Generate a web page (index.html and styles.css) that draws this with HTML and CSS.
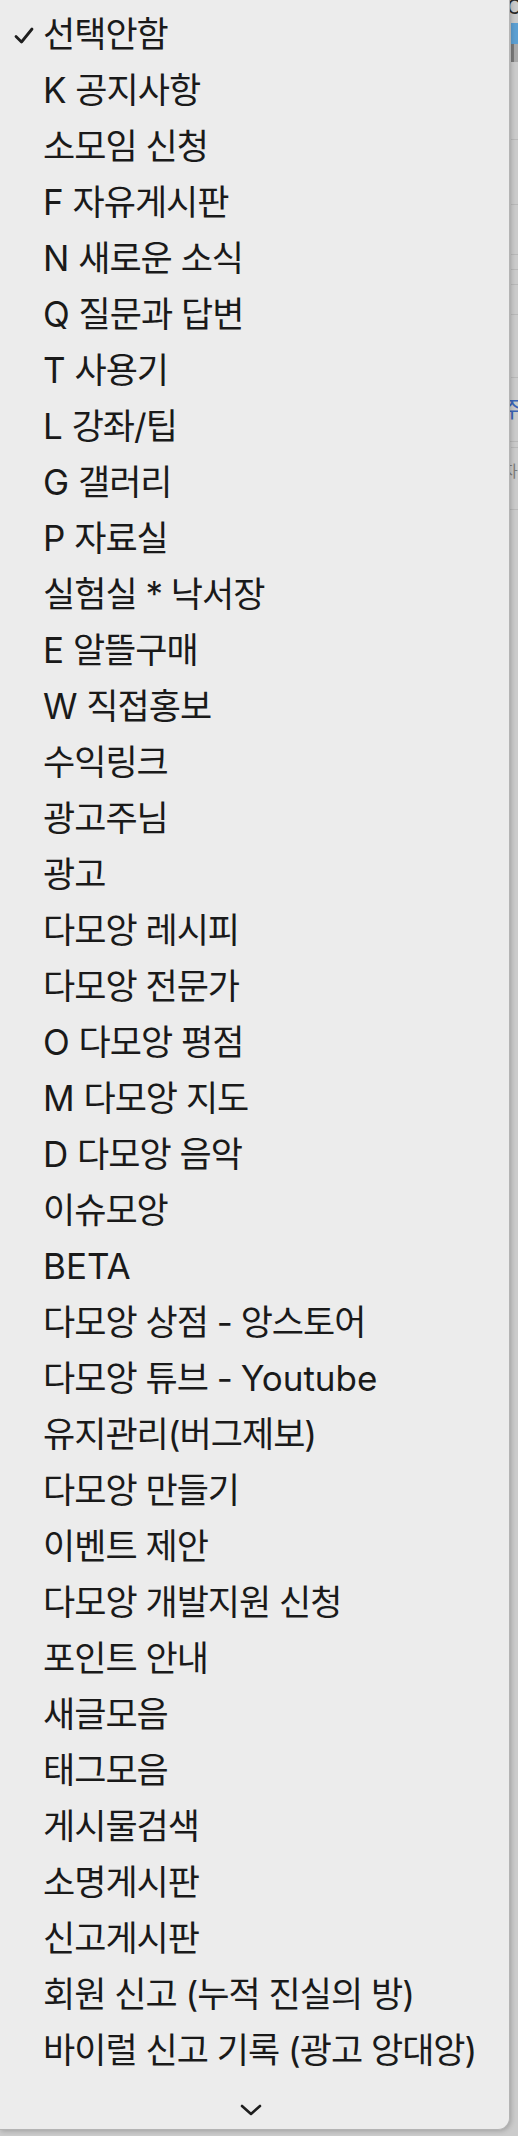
FILE: index.html
```html
<!DOCTYPE html>
<html lang="ko">
<head>
<meta charset="utf-8">
<title>게시판 선택</title>
<link rel="stylesheet" href="styles.css">
</head>
<body>
  <!-- page underneath the open popup -->
  <div class="page">
    <div class="pg-row pg-head">C</div>
    <div class="pg-row pg-tab"></div>
    <div class="pg-row pg-thumb"></div>
    <div class="pg-row pg-line h78"></div>
    <div class="pg-row pg-line h65"></div>
    <div class="pg-row pg-line h50"></div>
    <div class="pg-row pg-line h15"></div>
    <div class="pg-row pg-line h15"></div>
    <div class="pg-row pg-line h30"></div>
    <div class="pg-row pg-line h63"></div>
    <div class="pg-row pg-line h64 pg-link">주</div>
    <div class="pg-row pg-line h6"></div>
    <div class="pg-row pg-line h62 pg-meta">자</div>
  </div>

  <!-- category select popup -->
  <div class="menu" role="listbox">
    <ul class="menu-list">
      <li class="item is-selected" role="option" aria-selected="true">
        <span class="check"><svg width="20" height="18" viewBox="0 0 20 18"><polyline points="2,9.5 7.5,15 18,2" fill="none" stroke="#1e1e1e" stroke-width="2.8" stroke-linecap="round" stroke-linejoin="round"/></svg></span>
        <span class="label">선택안함</span>
      </li>
      <li class="item"><span class="check"></span><span class="label"><span class="lat">K</span> 공지사항</span></li>
      <li class="item"><span class="check"></span><span class="label">소모임 신청</span></li>
      <li class="item"><span class="check"></span><span class="label"><span class="lat">F</span> 자유게시판</span></li>
      <li class="item"><span class="check"></span><span class="label"><span class="lat">N</span> 새로운 소식</span></li>
      <li class="item"><span class="check"></span><span class="label"><span class="lat">Q</span> 질문과 답변</span></li>
      <li class="item"><span class="check"></span><span class="label"><span class="lat">T</span> 사용기</span></li>
      <li class="item"><span class="check"></span><span class="label"><span class="lat">L</span> 강좌/팁</span></li>
      <li class="item"><span class="check"></span><span class="label"><span class="lat">G</span> 갤러리</span></li>
      <li class="item"><span class="check"></span><span class="label"><span class="lat">P</span> 자료실</span></li>
      <li class="item"><span class="check"></span><span class="label">실험실 * 낙서장</span></li>
      <li class="item"><span class="check"></span><span class="label"><span class="lat">E</span> 알뜰구매</span></li>
      <li class="item"><span class="check"></span><span class="label"><span class="lat">W</span> 직접홍보</span></li>
      <li class="item"><span class="check"></span><span class="label">수익링크</span></li>
      <li class="item"><span class="check"></span><span class="label">광고주님</span></li>
      <li class="item"><span class="check"></span><span class="label">광고</span></li>
      <li class="item"><span class="check"></span><span class="label">다모앙 레시피</span></li>
      <li class="item"><span class="check"></span><span class="label">다모앙 전문가</span></li>
      <li class="item"><span class="check"></span><span class="label"><span class="lat">O</span> 다모앙 평점</span></li>
      <li class="item"><span class="check"></span><span class="label"><span class="lat">M</span> 다모앙 지도</span></li>
      <li class="item"><span class="check"></span><span class="label"><span class="lat">D</span> 다모앙 음악</span></li>
      <li class="item"><span class="check"></span><span class="label">이슈모앙</span></li>
      <li class="item"><span class="check"></span><span class="label"><span class="lat">BETA</span></span></li>
      <li class="item"><span class="check"></span><span class="label">다모앙 상점 - 앙스토어</span></li>
      <li class="item"><span class="check"></span><span class="label">다모앙 튜브 - <span class="lat">Youtube</span></span></li>
      <li class="item"><span class="check"></span><span class="label">유지관리(버그제보)</span></li>
      <li class="item"><span class="check"></span><span class="label">다모앙 만들기</span></li>
      <li class="item"><span class="check"></span><span class="label">이벤트 제안</span></li>
      <li class="item"><span class="check"></span><span class="label">다모앙 개발지원 신청</span></li>
      <li class="item"><span class="check"></span><span class="label">포인트 안내</span></li>
      <li class="item"><span class="check"></span><span class="label">새글모음</span></li>
      <li class="item"><span class="check"></span><span class="label">태그모음</span></li>
      <li class="item"><span class="check"></span><span class="label">게시물검색</span></li>
      <li class="item"><span class="check"></span><span class="label">소명게시판</span></li>
      <li class="item"><span class="check"></span><span class="label">신고게시판</span></li>
      <li class="item"><span class="check"></span><span class="label">회원 신고 (누적 진실의 방)</span></li>
      <li class="item"><span class="check"></span><span class="label">바이럴 신고 기록 (광고 앙대앙)</span></li>
    </ul>
    <div class="scroll-more">
      <svg width="22" height="12" viewBox="0 0 22 12"><polyline points="2,2 11,10 20,2" fill="none" stroke="#1e1e1e" stroke-width="2.6" stroke-linecap="round" stroke-linejoin="round"/></svg>
    </div>
  </div>
</body>
</html>
```

FILE: styles.css
```css
html, body {
  margin: 0;
  padding: 0;
}

body {
  width: 518px;
  height: 2136px;
  overflow: hidden;
  position: relative;
  background: #cbcbcb;
  font-family: "Inter", "Noto Sans CJK KR", sans-serif;
}

/* ---- page behind the popup (dimmed) ---- */
.page {
  padding-left: 511px;
  display: flex;
  flex-direction: column;
}

.pg-row {
  box-sizing: border-box;
  overflow: hidden;
  white-space: nowrap;
}

.pg-head {
  height: 22px;
  font-size: 20px;
  line-height: 14px;
  color: #2a2a2a;
  margin-left: -4px;
}

.pg-tab {
  height: 21px;
  margin-top: 1px;
  background: #5c9fd2;
}

.pg-thumb {
  height: 18px;
  background: linear-gradient(90deg, #7a7a7a 0 3px, #a9a9a9 3px);
}

.pg-line { border-bottom: 1px solid #b9b9b9; }
.h6 { height: 6px; }
.h15 { height: 15px; }
.h30 { height: 30px; }
.h50 { height: 50px; }
.h62 { height: 62px; }
.h63 { height: 63px; }
.h64 { height: 64px; }
.h65 { height: 65px; }
.h78 { height: 78px; }

.pg-link {
  color: #3a64b8;
  font-size: 22px;
  padding-top: 19px;
  line-height: 24px;
  margin-left: -9px;
}

.pg-meta {
  color: #7b7b7b;
  font-size: 16px;
  padding-top: 14px;
  line-height: 18px;
  margin-left: -8px;
}

/* ---- popup ---- */
.menu {
  position: absolute;
  top: 0;
  left: 0;
  width: 510px;
  background: #ececec;
  border-right: 1px solid #b4b4b4;
  border-bottom: 1px solid #b4b4b4;
  border-bottom-right-radius: 12px;
  box-sizing: border-box;
  box-shadow: 1px 1px 5px rgba(0, 0, 0, 0.22);
  padding-top: 6px;
}

.menu-list {
  list-style: none;
  margin: 0;
  padding: 0;
}

.item {
  display: grid;
  grid-template-columns: 43px 1fr;
  align-items: center;
  height: 56px;
  color: #1a1a1a;
  font-size: 35px;
  line-height: 56px;
  white-space: nowrap;
}

.check {
  display: flex;
  align-items: center;
  padding-left: 14px;
  height: 56px;
  padding-top: 4px;
  box-sizing: border-box;
}

.label {
  letter-spacing: -1px;
}

.lat {
  letter-spacing: 0;
}

.scroll-more {
  height: 51px;
  display: flex;
  justify-content: center;
  padding-top: 26px;
  box-sizing: border-box;
  padding-right: 8px;
}

.scroll-more svg {
  display: block;
}
```
